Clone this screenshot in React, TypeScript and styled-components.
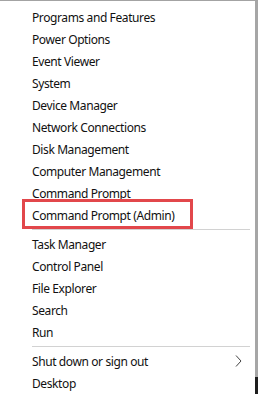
import React from "react";
import styled, { createGlobalStyle } from "styled-components";

const Global = createGlobalStyle`
  html, body { margin: 0; padding: 0; background: #fff; }
  body { width: 258px; height: 394px; overflow: hidden; }
`;

const Frame = styled.div`
  display: flex;
  width: 258px;
  height: 394px;
  box-sizing: border-box;
  border-top: 1px solid #a3a3a3;
  background: #fff;
`;

const Menu = styled.ul`
  flex: 1;
  margin: 0;
  padding: 5px 0 0 0;
  list-style: none;
  display: flex;
  flex-direction: column;
`;

const Edge = styled.div`
  width: 3px;
  background: linear-gradient(
    to bottom,
    #a6a6a6 0,
    #a6a6a6 376px,
    #1e1e1e 376px,
    #1e1e1e 100%
  );
`;

const Item = styled.li`
  position: relative;
  height: 22px;
  display: flex;
  align-items: center;
  justify-content: space-between;
  padding: 0 13px 0 32px;
  font-family: "Noto Sans", "Open Sans", sans-serif;
  font-size: 12px;
  letter-spacing: -0.4px;
  color: #111;
  white-space: nowrap;
`;

const Separator = styled.li`
  height: 1px;
  margin: 3px 5px 3px 32px;
  background: #d2d2d2;
`;

const Highlight = styled.span`
  position: absolute;
  left: 22px;
  top: -5px;
  width: 171px;
  height: 30px;
  box-sizing: border-box;
  border: 3px solid #e2474b;
  pointer-events: none;
`;

const Chevron = () => (
  <svg width="7" height="12" viewBox="0 0 7 12" fill="none">
    <polyline points="1,0.5 6,6 1,11.5" stroke="#444" strokeWidth="1" />
  </svg>
);

const groups: string[][] = [
  [
    "Programs and Features",
    "Power Options",
    "Event Viewer",
    "System",
    "Device Manager",
    "Network Connections",
    "Disk Management",
    "Computer Management",
    "Command Prompt",
    "Command Prompt (Admin)",
  ],
  ["Task Manager", "Control Panel", "File Explorer", "Search", "Run"],
  ["Shut down or sign out", "Desktop"],
];

export default function App() {
  return (
    <>
      <Global />
      <Frame>
        <Menu>
          {groups.map((g, gi) => (
            <React.Fragment key={gi}>
              {gi > 0 && <Separator />}
              {g.map((label) => (
                <Item key={label}>
                  <span>{label}</span>
                  {label === "Shut down or sign out" && <Chevron />}
                  {label === "Command Prompt (Admin)" && <Highlight />}
                </Item>
              ))}
            </React.Fragment>
          ))}
        </Menu>
        <Edge />
      </Frame>
    </>
  );
}
